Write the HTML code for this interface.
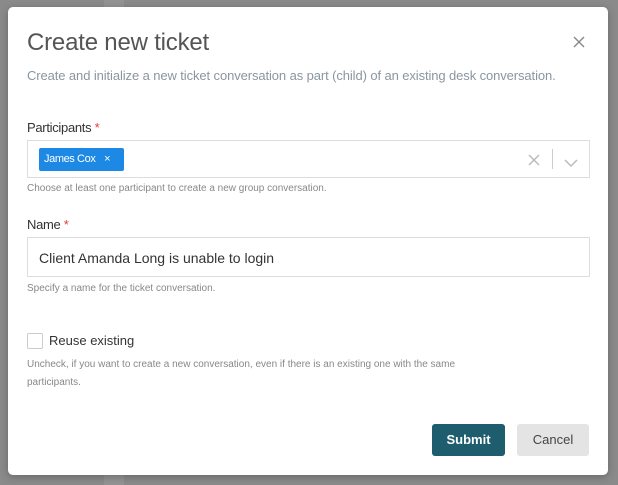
<!DOCTYPE html>
<html><head><style>
*{box-sizing:border-box;margin:0;padding:0}
body{width:618px;height:485px;background:#8a8a8a;font-family:"Liberation Sans",sans-serif;position:relative;overflow:hidden}
.strip{position:absolute;left:104px;top:0;width:20px;height:485px;background:#939393}
.modal{position:absolute;left:8px;top:7px;width:600px;height:468px;background:#fff;border-radius:5px;box-shadow:0 2px 8px rgba(0,0,0,.25)}
.a{position:absolute}
h1{position:absolute;left:19px;top:22px;font-size:24px;font-weight:normal;color:#555;letter-spacing:-0.2px}
.sub{left:19px;top:61px;font-size:13px;color:#8a96a0;letter-spacing:-0.1px}
.lbl{font-size:13px;color:#333;letter-spacing:-0.3px}
.lbl span{color:#e53935}
.help{font-size:10px;color:#888}
.inp{border:1px solid #ddd;background:#fff}
</style></head><body>
<div class="strip"></div>
<div class="modal">
<h1>Create new ticket</h1>
<div class="a" style="left:564px;top:28px;width:14px;height:14px">
<svg width="14" height="14"><path d="M2 2L12 12M12 2L2 12" stroke="#888" stroke-width="1.4"/></svg></div>
<div class="a sub">Create and initialize a new ticket conversation as part (child) of an existing desk conversation.</div>
<div class="a lbl" style="left:19px;top:113px">Participants <span>*</span></div>
<div class="a inp" style="left:19px;top:133px;width:563px;height:38px">
<div class="a" style="left:11px;top:7px;width:85px;height:23px;background:#1e88e5;border-radius:2px;color:#fff;font-size:11px;letter-spacing:-0.4px;line-height:23px;padding-left:5px">James Cox <span style="margin-left:6px">×</span></div>
<div class="a" style="left:500px;top:12px"><svg width="12" height="12"><path d="M1 1L11 11M11 1L1 11" stroke="#bbb" stroke-width="1.5"/></svg></div>
<div class="a" style="left:524px;top:8px;width:1px;height:20px;background:#ccc"></div>
<div class="a" style="left:536px;top:14px"><svg width="14" height="9"><path d="M1 1L7 7L13 1" stroke="#bbb" stroke-width="1.5" fill="none"/></svg></div>
</div>
<div class="a help" style="left:19px;top:176px">Choose at least one participant to create a new group conversation.</div>
<div class="a lbl" style="left:19px;top:210px">Name <span>*</span></div>
<div class="a inp" style="left:19px;top:230px;width:563px;height:40px;font-size:14px;color:#333;line-height:40px;padding-left:11px">Client Amanda Long is unable to login</div>
<div class="a help" style="left:19px;top:276px">Specify a name for the ticket conversation.</div>
<div class="a" style="left:19px;top:326px;width:16px;height:16px;border:1px solid #ccc;border-radius:2px"></div>
<div class="a lbl" style="left:41px;top:326px;font-size:13px;letter-spacing:0">Reuse existing</div>
<div class="a help" style="left:19px;top:349px;line-height:18px;width:440px">Uncheck, if you want to create a new conversation, even if there is an existing one with the same participants.</div>
<div class="a" style="left:424px;top:417px;width:73px;height:32px;background:#1e5d6e;border-radius:3px;color:#fff;font-size:13px;font-weight:bold;text-align:center;line-height:32px">Submit</div>
<div class="a" style="left:509px;top:417px;width:72px;height:32px;background:#e4e4e4;border-radius:3px;color:#444;font-size:13px;text-align:center;line-height:32px">Cancel</div>
</div>
</body></html>
